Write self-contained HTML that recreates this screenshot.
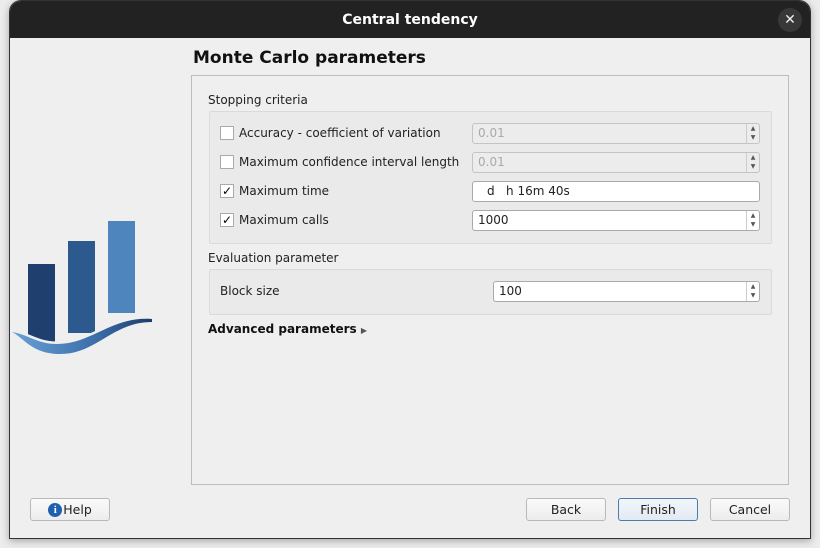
<!DOCTYPE html>
<html><head><style>
*{box-sizing:border-box;margin:0;padding:0}
body{width:820px;height:548px;background:#ececec;font-family:"DejaVu Sans","Liberation Sans",sans-serif;font-size:12px;color:#222;position:relative;overflow:hidden}
.win{position:absolute;left:9px;top:0;width:802px;height:539px;background:#efefef;border:1px solid #333;border-radius:12px 12px 0 0;overflow:hidden;box-shadow:0 2px 8px rgba(0,0,0,.3)}
.tb{position:absolute;left:0;top:0;width:100%;height:37px;background:#222;color:#fff;font-weight:bold;font-size:14px;text-align:center;line-height:38px}
.x{position:absolute;right:8px;top:7px;width:24px;height:24px;border-radius:50%;background:#383838;color:#eee;font-size:14px;line-height:24px;text-align:center;font-weight:normal}
.a{position:absolute}
.panel{position:absolute;left:181px;top:74px;width:598px;height:410px;border:1px solid #bdbdbd}
.grp{position:absolute;background:#eaeaea;border:1px solid #dadada;border-radius:2px}
.cb{position:absolute;width:14px;height:14px;border:1px solid #aaa;background:#fff;font-size:12px;line-height:12px;text-align:center;color:#000;font-weight:bold}
.in{position:absolute;height:21px;border:1px solid #aaa;border-radius:3px;background:#fff;padding-left:5px;line-height:19px;font-size:12px}
.in.dis{background:#ececec;color:#aaa;border-color:#c4c4c4}
.sp{position:absolute;right:0;top:0;width:13px;height:100%;border-left:1px solid #ccc;font-size:6px;line-height:9px;text-align:center;color:#555}
.btn{position:absolute;top:497px;height:23px;border:1px solid #b8b8b8;border-radius:3px;background:linear-gradient(#fafafa,#ececec);text-align:center;line-height:21px;font-size:12.5px}
</style></head><body>
<div class="win">
<div class="tb">Central tendency<div class="x">✕</div></div>
<svg class="a" style="left:2px;top:215px" width="145" height="140" viewBox="0 0 145 140">
<defs><linearGradient id="w" x1="0" x2="1"><stop offset="0" stop-color="#6aa0d6"/><stop offset=".6" stop-color="#3b6ea8"/><stop offset="1" stop-color="#1d3b6a"/></linearGradient></defs>
<rect x="16" y="48" width="27" height="78" fill="#1f3f6f"/>
<rect x="56" y="25" width="27" height="92" fill="#2d5a8e"/>
<rect x="96" y="5" width="27" height="92" fill="#4f85bd"/>
<path d="M0 116 C15 118 25 128 45 128 C80 128 100 100 140 103 L140 106 C100 106 85 138 48 138 C20 138 12 122 0 116Z" fill="#efefef" stroke="#efefef" stroke-width="5"/>
<path d="M0 116 C15 118 25 128 45 128 C80 128 100 100 140 103 L140 106 C100 106 85 138 48 138 C20 138 12 122 0 116Z" fill="url(#w)"/>
</svg>
<div class="a" style="left:183px;top:47px;font-size:17px;font-weight:bold;color:#111">Monte Carlo parameters</div>
<div class="panel"></div>
<div class="a" style="left:198px;top:92px">Stopping criteria</div>
<div class="grp" style="left:199px;top:110px;width:563px;height:133px"></div>
<div class="cb" style="left:210px;top:125px"></div><div class="a" style="left:229px;top:125px">Accuracy - coefficient of variation</div>
<div class="in dis" style="left:462px;top:122px;width:288px">0.01<div class="sp">▲<br>▼</div></div>
<div class="cb" style="left:210px;top:154px"></div><div class="a" style="left:229px;top:154px">Maximum confidence interval length</div>
<div class="in dis" style="left:462px;top:151px;width:288px">0.01<div class="sp">▲<br>▼</div></div>
<div class="cb" style="left:210px;top:183px">✓</div><div class="a" style="left:229px;top:183px">Maximum time</div>
<div class="in" style="left:462px;top:180px;width:288px;padding-left:14px">d &nbsp; h 16m 40s</div>
<div class="cb" style="left:210px;top:212px">✓</div><div class="a" style="left:229px;top:212px">Maximum calls</div>
<div class="in" style="left:462px;top:209px;width:288px">1000<div class="sp">▲<br>▼</div></div>
<div class="a" style="left:198px;top:250px">Evaluation parameter</div>
<div class="grp" style="left:199px;top:268px;width:563px;height:46px"></div>
<div class="a" style="left:210px;top:283px">Block size</div>
<div class="in" style="left:483px;top:280px;width:267px">100<div class="sp">▲<br>▼</div></div>
<div class="a" style="left:198px;top:321px;font-weight:bold;color:#111">Advanced parameters <span style="font-size:8px;color:#555">▶</span></div>
<div class="btn" style="left:20px;width:80px;display:flex;align-items:center;justify-content:center;gap:1px"><span style="display:inline-block;width:14px;height:14px;border-radius:50%;background:#1f5fb0;color:#fff;font-weight:bold;font-size:11px;line-height:14px;font-family:serif;text-align:center">i</span>Help</div>
<div class="btn" style="left:516px;width:80px">Back</div>
<div class="btn" style="left:608px;width:80px;border-color:#4a7cb0;background:linear-gradient(#f2f6fa,#e2eaf2)">Finish</div>
<div class="btn" style="left:700px;width:80px">Cancel</div>
</div>
</body></html>
